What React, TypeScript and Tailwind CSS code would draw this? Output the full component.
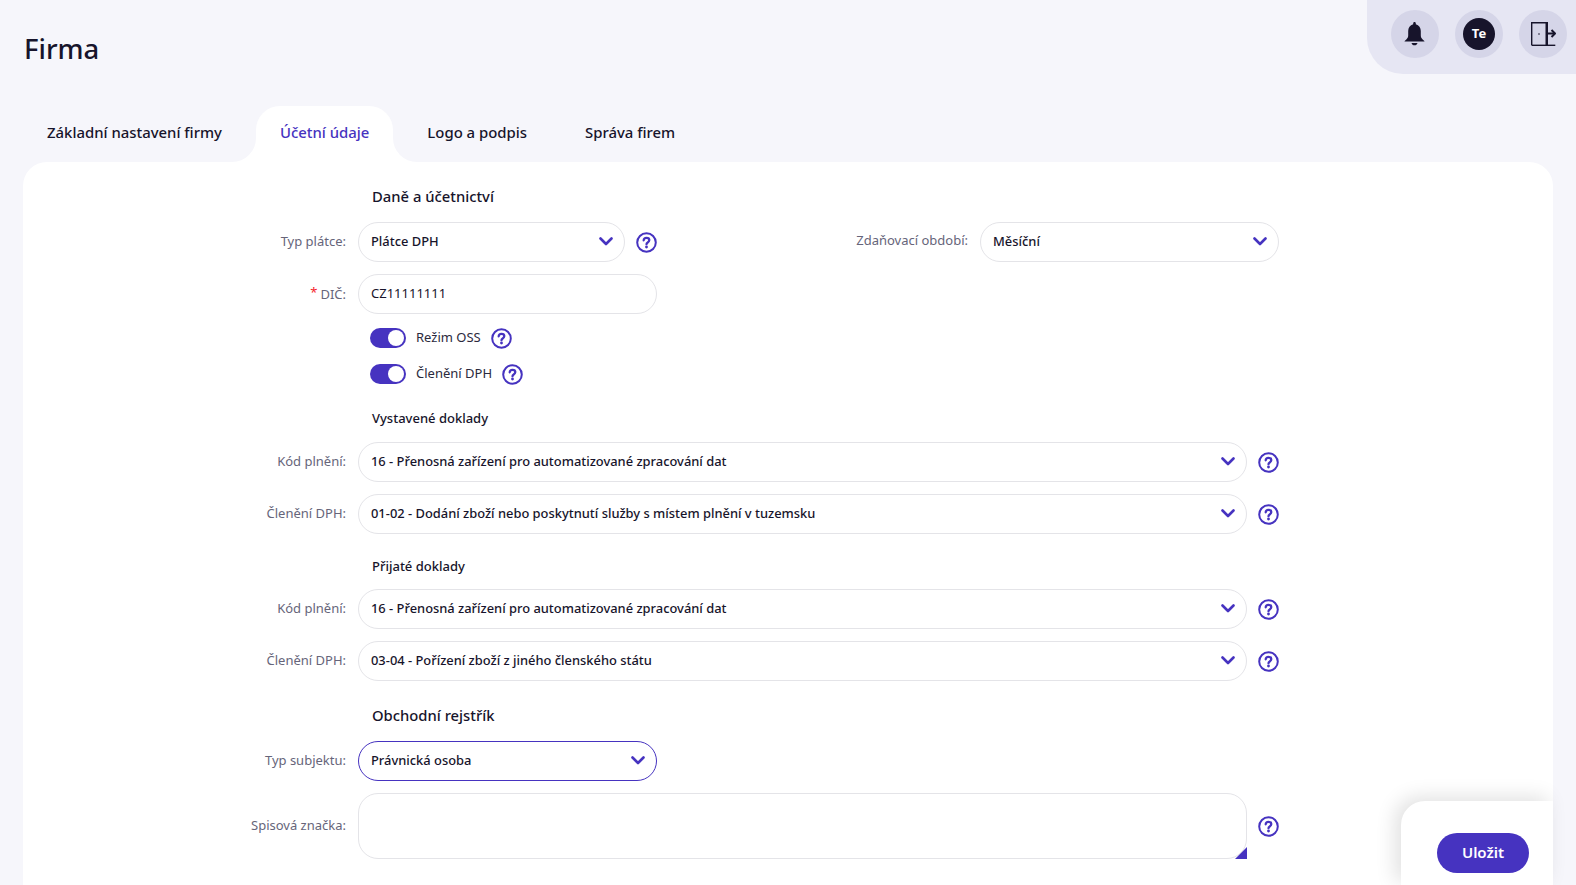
import { ReactNode } from "react";

const Chevron = () => (
  <svg width="14" height="9" viewBox="0 0 14 9" fill="none" className="shrink-0">
    <path d="M1.500 1.500 7 7l5.500-5.500" stroke="#4633c0" strokeWidth="2.600" strokeLinecap="round" strokeLinejoin="round" />
  </svg>
);

const Help = () => (
  <svg width="21" height="21" viewBox="0 0 21 21" fill="none" className="shrink-0">
    <circle cx="10.500" cy="10.500" r="9.300" stroke="#4633c0" strokeWidth="2" />
    <path d="M7.700 8.300C7.800 6.700 9 5.800 10.500 5.800c1.600 0 2.800.9 2.800 2.300 0 1.200-.8 1.800-1.600 2.300-.8.500-1.200 1-1.200 1.800" stroke="#4633c0" strokeWidth="2.300" strokeLinecap="round" />
    <circle cx="10.500" cy="15" r="1.400" fill="#4633c0" />
  </svg>
);

const Label = ({ children, required }: { children: ReactNode; required?: boolean }) => (
  <div className="w-[335px] shrink-0 pb-[2px] pr-3 text-right text-[13px] leading-5 text-[#66657a]">
    {required && <span className="mr-[3px] align-[2px] text-[#f5222d]">*</span>}
    {children}
  </div>
);

const Select = ({ value, className = "", active }: { value: string; className?: string; active?: boolean }) => (
  <div
    className={`flex h-10 items-center justify-between rounded-[20px] border bg-white pb-[2px] pl-3 pr-[11px] text-[12.900px] font-medium text-[#17142b] ${active ? "border-[#4633c0]" : "border-[#e4e4e8]"} ${className}`}
  >
    <span className="pt-[2px]">{value}</span>
    <Chevron />
  </div>
);

const Row = ({ label, required, children, className = "" }: { label: string; required?: boolean; children: ReactNode; className?: string }) => (
  <div className={`flex items-center ${className}`}>
    <Label required={required}>{label}:</Label>
    {children}
  </div>
);

const WideSelect = ({ label, value, className = "" }: { label: string; value: string; className?: string }) => (
  <Row label={label} className={className}>
    <Select value={value} className="w-[889px]" />
    <div className="ml-[11px]">
      <Help />
    </div>
  </Row>
);

const Toggle = ({ label, className = "" }: { label: string; className?: string }) => (
  <div className={`ml-[347px] flex h-5 items-center ${className}`}>
    <div className="flex h-5 w-9 items-center justify-end rounded-full bg-[#4633c0] pr-[2px]">
      <div className="h-4 w-4 rounded-full bg-white" />
    </div>
    <span className="mx-[10px] pb-[1px] text-[13px] text-[#2b2a3d]">{label}</span>
    <Help />
  </div>
);

const Section = ({ children, className = "", large }: { children: ReactNode; className?: string; large?: boolean }) => (
  <div className={`ml-[349px] font-medium leading-5 text-[#17142b] ${large ? "text-[14.800px]" : "text-[13px]"} ${className}`}>{children}</div>
);

const Tab = ({ label, active }: { label: string; active?: boolean }) => (
  <div
    className={`relative flex h-14 items-center px-6 pb-[3px] text-[14.900px] font-medium ${active ? "rounded-t-[24px] bg-white text-[#4633c0]" : "text-[#17142b]"}`}
  >
    {label}
    {active && (
      <>
        <div className="absolute bottom-0 left-[-24px] h-6 w-6 bg-white">
          <div className="h-6 w-6 rounded-br-[24px] bg-[#f6f6fb]" />
        </div>
        <div className="absolute bottom-0 right-[-24px] h-6 w-6 bg-white">
          <div className="h-6 w-6 rounded-bl-[24px] bg-[#f6f6fb]" />
        </div>
      </>
    )}
  </div>
);

export default function App() {
  return (
    <div className="relative h-[885px] w-[1576px] overflow-hidden bg-[#f6f6fb] font-['Noto_Sans',sans-serif]">
      <header className="flex h-[106px] items-start justify-between pl-6">
        <h1 className="mt-[31px] text-[27.500px] font-medium leading-9 text-[#17142b]">Firma</h1>
        <div className="flex h-[74px] w-[209px] items-start gap-4 rounded-bl-[36px] bg-[#e6e6f3] pl-6 pt-[10px]">
          <div className="flex h-12 w-12 items-center justify-center rounded-full bg-[#d5d5e8]">
            <svg width="21" height="24" viewBox="0 0 21 24" fill="#17142b" className="mr-[1px]">
              <path d="M10.500 0C9.700 0 9.200.6 9.200 1.300v1C6 3.200 4.200 5.900 4.200 9.100v4.400c0 2-.9 3.300-3 5-.4.300-.7.700-.7 1.100h20c0-.4-.3-.8-.7-1.100-2.100-1.700-3-3-3-5V9.100c0-3.200-1.800-5.900-5-6.800v-1C11.800.6 11.300 0 10.500 0z" />
              <path d="M7.500 21h6c-.4 1.500-1.500 2.300-3 2.300s-2.600-.8-3-2.300z" />
            </svg>
          </div>
          <div className="flex h-12 w-12 items-center justify-center rounded-full bg-[#d5d5e8]">
            <div className="flex h-8 w-8 items-center justify-center rounded-full bg-[#17142b] text-[13px] font-bold text-white">Te</div>
          </div>
          <div className="flex h-12 w-12 items-center justify-center rounded-full bg-[#d5d5e8]">
            <svg width="25" height="24" viewBox="0 0 25 24" fill="none" stroke="#17142b" strokeWidth="1.400">
              <path d="M.7 23.300h23.600" />
              <path d="M.7 23.300V.7h15.600v22.600" />
              <path d="M15.500.7v22.600" strokeWidth="2" />
              <path d="M16.500 11.500h7" strokeWidth="2" />
              <path d="M20.500 8 24 11.500 20.500 15" strokeWidth="2" strokeLinejoin="round" />
              <circle cx="8" cy="12" r="0.800" fill="#17142b" stroke="none" />
            </svg>
          </div>
        </div>
      </header>

      <div className="mx-[23px]">
        <div className="flex gap-[10px]">
          <Tab label="Základní nastavení firmy" />
          <Tab label="Účetní údaje" active />
          <Tab label="Logo a podpis" />
          <Tab label="Správa firem" />
        </div>

        <main className="h-[723px] rounded-t-[24px] bg-white pt-6">
          <Section large>Daně a účetnictví</Section>
          <div className="mt-4 flex items-center">
            <Label>Typ plátce:</Label>
            <Select value="Plátce DPH" className="w-[267px]" />
            <div className="ml-[11px]">
              <Help />
            </div>
            <div className="w-[323px] shrink-0 pb-[2px] pr-3 text-right text-[13px] text-[#66657a]">Zdaňovací období:</div>
            <Select value="Měsíční" className="w-[299px]" />
          </div>
          <Row label="DIČ" required className="mt-3">
            <div className="flex h-10 w-[299px] items-center rounded-[20px] border border-[#e4e4e8] px-3 text-[13px] text-[#17142b]">CZ11111111</div>
          </Row>
          <Toggle label="Režim OSS" className="mt-[14px]" />
          <Toggle label="Členění DPH" className="mt-4" />
          <Section className="mt-6">Vystavené doklady</Section>
          <WideSelect className="mt-[14px]" label="Kód plnění" value="16 - Přenosná zařízení pro automatizované zpracování dat" />
          <WideSelect className="mt-3" label="Členění DPH" value="01-02 - Dodání zboží nebo poskytnutí služby s místem plnění v tuzemsku" />
          <Section className="mt-[22px]">Přijaté doklady</Section>
          <WideSelect className="mt-[13px]" label="Kód plnění" value="16 - Přenosná zařízení pro automatizované zpracování dat" />
          <WideSelect className="mt-3" label="Členění DPH" value="03-04 - Pořízení zboží z jiného členského státu" />
          <Section large className="mt-6">Obchodní rejstřík</Section>
          <Row label="Typ subjektu" className="mt-4">
            <Select value="Právnická osoba" className="w-[299px]" active />
          </Row>
          <Row label="Spisová značka" className="mt-3">
            <div className="relative h-[66px] w-[889px] rounded-[20px] border border-[#e4e4e8]">
              <div className="absolute bottom-[-1px] right-[-1px] h-3 w-3 bg-[#4633c0] [clip-path:polygon(100%_0,100%_100%,0_100%)]" />
            </div>
            <div className="ml-[11px]">
              <Help />
            </div>
          </Row>
        </main>
      </div>

      <div className="absolute bottom-0 right-[23px] h-[84px] w-[152px] rounded-tl-[24px] bg-white pl-9 pt-8 shadow-[-6px_-4px_20px_rgba(0,0,0,0.12)]">
        <button className="h-10 w-[92px] rounded-full bg-[#4633c0] pb-[2px] text-[15px] font-semibold text-white">Uložit</button>
      </div>
    </div>
  );
}
